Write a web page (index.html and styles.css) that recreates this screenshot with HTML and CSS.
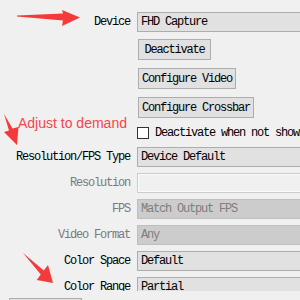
FILE: index.html
```html
<!DOCTYPE html>
<html lang="en">
<head>
    <meta charset="UTF-8">
    <title>Video Capture Device</title>
    <link rel="stylesheet" href="styles.css">
</head>
<body>
<div class="page">
    <div class="form">
        <div class="row">
            <span class="label">Device</span>
            <div class="combo">FHD Capture</div>
        </div>
        <div class="row row-btn first-btn">
            <span></span>
            <div><button class="btn">Deactivate</button></div>
        </div>
        <div class="row row-btn next-btn">
            <span></span>
            <div><button class="btn">Configure Video</button></div>
        </div>
        <div class="row row-btn next-btn">
            <span></span>
            <div><button class="btn">Configure Crossbar</button></div>
        </div>
        <div class="row row-check">
            <span></span>
            <label class="check"><span class="box"></span>Deactivate when not showing</label>
        </div>
        <div class="row after-check">
            <span class="label">Resolution/FPS Type</span>
            <div class="combo">Device Default</div>
        </div>
        <div class="row">
            <span class="label disabled">Resolution</span>
            <div class="edit"></div>
        </div>
        <div class="row">
            <span class="label disabled">FPS</span>
            <div class="combo off">Match Output FPS</div>
        </div>
        <div class="row">
            <span class="label disabled">Video Format</span>
            <div class="combo off">Any</div>
        </div>
        <div class="row">
            <span class="label">Color Space</span>
            <div class="combo">Default</div>
        </div>
        <div class="row">
            <span class="label">Color Range</span>
            <div class="combo">Partial</div>
        </div>
    </div>
    <div class="footer">
        <button class="btn wide"></button>
    </div>

    <!-- annotations drawn over the form -->
    <svg class="notes" width="300" height="300" viewBox="0 0 300 300">
        <polygon points="17,15.5 63,13.5 62,10 80,17.5 62,26 63,20.5 17,16.5" fill="#f43a3a"/>
        <polygon points="4,114 12.5,128.5 18.5,127 17,145 4,132 9,130.5" fill="#f43a3a"/>
        <polygon points="23,253 43.8,270.5 48,265 53,283 36.7,280 40.8,274.5" fill="#f43a3a"/>
    </svg>
    <div class="note-text">Adjust to demand</div>
</div>
</body>
</html>
```

FILE: styles.css
```css
* {
    margin: 0;
    padding: 0;
    box-sizing: border-box;
}

body {
    background: #f0f0f0;
    width: 300px;
    height: 300px;
    overflow: hidden;
    font-family: "Liberation Mono", monospace;
    font-size: 12px;
    letter-spacing: -1.2px;
    color: #000;
}

.page {
    position: relative;
    width: 300px;
    height: 300px;
}

.form {
    display: flex;
    flex-direction: column;
    gap: 6px;
    padding-top: 12px;
    width: 460px;
    height: 291px;
    overflow: hidden;
}

.row {
    display: grid;
    grid-template-columns: 130px 1fr;
    column-gap: 7px;
    align-items: center;
    height: 20px;
    flex-shrink: 0;
}

.row-btn {
    height: 21px;
}

.first-btn {
    margin-top: 1px;
}

.next-btn {
    margin-top: 2px;
}

.row-check {
    height: 18px;
}

.after-check {
    margin-top: -1px;
}

.label {
    text-align: right;
    white-space: nowrap;
}

.label.disabled {
    color: #7a7a7a;
}

.combo {
    height: 20px;
    line-height: 18px;
    padding-left: 3px;
    border: 1px solid #adadad;
    background: #e1e1e1;
    white-space: nowrap;
}

.combo.off {
    border-color: #bfbfbf;
    background: #cccccc;
    color: #7e7e7e;
}

.edit {
    height: 20px;
    border: 1px solid #cccccc;
    background: #f0f0f0;
    box-shadow: inset 0 0 0 1px #fbfbfb;
}

.btn {
    display: block;
    margin-left: 1px;
    min-width: 73px;
    height: 21px;
    padding: 0 3px;
    border: 1px solid #adadad;
    background: #e1e1e1;
    font: inherit;
    letter-spacing: inherit;
    color: #000;
}

.check {
    display: flex;
    align-items: center;
    gap: 6px;
    white-space: nowrap;
}

.box {
    width: 12px;
    height: 12px;
    border: 1px solid #333;
    background: #fff;
    flex-shrink: 0;
}

.footer {
    padding: 7px 0 0 9px;
}

.btn.wide {
    margin-left: 0;
    width: 73px;
}

.notes {
    position: absolute;
    left: 0;
    top: 0;
}

.note-text {
    position: absolute;
    left: 18px;
    top: 115px;
    font-family: "Liberation Sans", Arial, sans-serif;
    font-size: 14px;
    letter-spacing: 0;
    color: #f5454a;
}
```
